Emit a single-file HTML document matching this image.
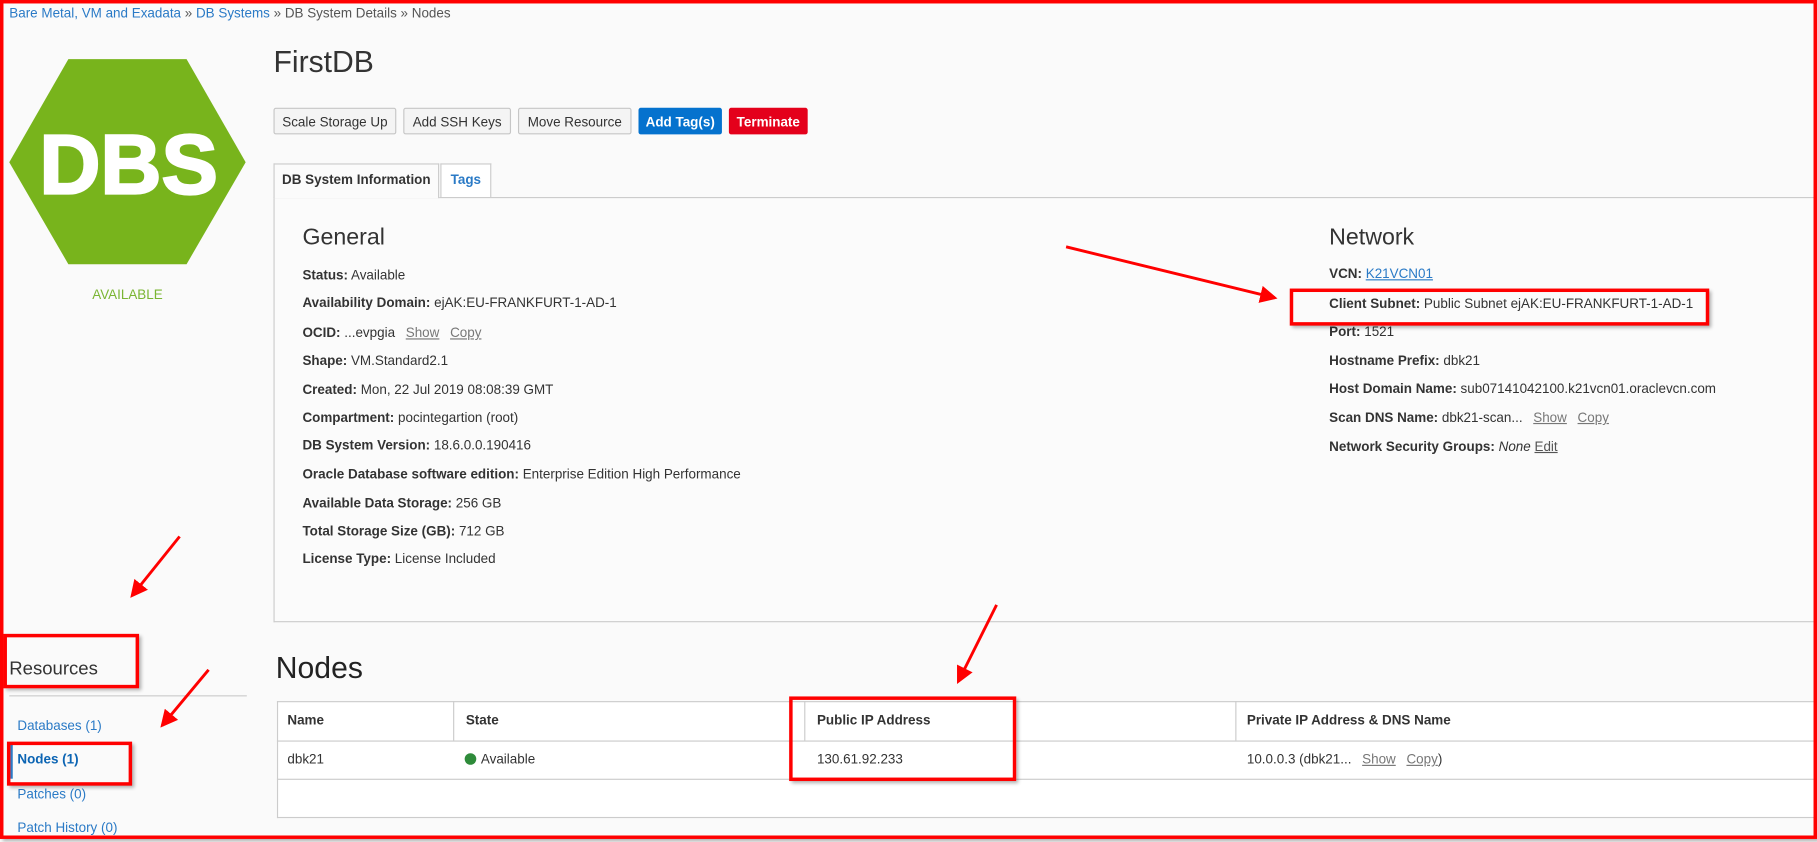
<!DOCTYPE html>
<html><head><meta charset="utf-8"><style>
html,body{margin:0;padding:0;width:1817px;height:842px;overflow:hidden;background:#fff;}
#w{position:absolute;left:0;top:0;width:1568px;height:727px;transform:scale(1.15880);transform-origin:0 0;background:#fafafa;font-family:"Liberation Sans",Arial,sans-serif;color:#333;font-size:11.6px;}
.a{position:absolute;white-space:nowrap;}
a,.lk{color:#2a7ac6;text-decoration:none;}
.btn{position:absolute;top:93px;height:23px;line-height:23px;border:1px solid #c6c6c6;border-radius:2px;background:#f4f4f4;text-align:center;font-size:11.6px;color:#333;box-sizing:border-box;}
.rw{position:absolute;white-space:nowrap;font-size:11.6px;color:#333;}
.rw b{font-weight:bold;color:#333;}
.sm{color:#777;text-decoration:underline;margin-left:6px;}
.rb{position:absolute;border:3px solid #f00;box-sizing:border-box;box-shadow:2px 2px 3px rgba(0,0,0,.3);}
</style></head><body><div id="w">
<div class="a" style="left:8px;top:5px;font-size:11.6px;color:#555;"><span class="lk">Bare Metal, VM and Exadata</span> » <span class="lk">DB Systems</span> » DB System Details » Nodes</div>

<svg class="a" style="left:0;top:0" width="230" height="240"><polygon points="8,140 59,51 161,51 212,140 161,228 59,228" fill="#78b41c"/><text x="111" y="167" text-anchor="middle" font-family="Liberation Sans,Arial,sans-serif" font-weight="bold" font-size="73" fill="#fff" stroke="#fff" stroke-width="2">DBS</text></svg>
<div class="a" style="left:0;width:220px;text-align:center;top:248px;color:#7ab533;font-size:11.6px;">AVAILABLE</div>

<div class="a" style="left:236px;top:38px;font-size:26px;color:#333;">FirstDB</div>
<div class="btn" style="left:236px;width:106px;">Scale Storage Up</div>
<div class="btn" style="left:348px;width:93px;">Add SSH Keys</div>
<div class="btn" style="left:447px;width:98px;">Move Resource</div>
<div class="btn" style="left:551px;width:72px;background:#0572ce;border-color:#0572ce;color:#fff;font-weight:bold;">Add Tag(s)</div>
<div class="btn" style="left:629px;width:68px;background:#e4001b;border-color:#e4001b;color:#fff;font-weight:bold;">Terminate</div>

<div class="a" style="left:236px;top:170px;width:1340px;height:367px;border:1px solid #ccc;border-right:none;box-sizing:border-box;background:#fbfbfb;"></div>
<div class="a" style="left:236px;top:141px;width:143px;height:30px;border:1px solid #ccc;border-bottom:none;box-sizing:border-box;background:#fbfbfb;line-height:28px;text-align:center;font-weight:bold;font-size:11.6px;color:#333;">DB System Information</div>
<div class="a" style="left:380px;top:141px;width:44px;height:29px;border:1px solid #ccc;border-bottom:none;box-sizing:border-box;background:#fff;line-height:28px;text-align:center;font-weight:bold;font-size:11.6px;color:#2a7ac6;">Tags</div>

<div class="a" style="left:261px;top:194px;font-size:20px;color:#333;">General</div>
<div class="rw" style="left:261px;top:231px"><b>Status:</b> Available</div>
<div class="rw" style="left:261px;top:255px"><b>Availability Domain:</b> ejAK:EU-FRANKFURT-1-AD-1</div>
<div class="rw" style="left:261px;top:281px"><b>OCID:</b> ...evpgia <span class="sm">Show</span> <span class="sm">Copy</span></div>
<div class="rw" style="left:261px;top:305px"><b>Shape:</b> VM.Standard2.1</div>
<div class="rw" style="left:261px;top:330px"><b>Created:</b> Mon, 22 Jul 2019 08:08:39 GMT</div>
<div class="rw" style="left:261px;top:354px"><b>Compartment:</b> pocintegartion (root)</div>
<div class="rw" style="left:261px;top:378px"><b>DB System Version:</b> 18.6.0.0.190416</div>
<div class="rw" style="left:261px;top:403px"><b>Oracle Database software edition:</b> Enterprise Edition High Performance</div>
<div class="rw" style="left:261px;top:428px"><b>Available Data Storage:</b> 256 GB</div>
<div class="rw" style="left:261px;top:452px"><b>Total Storage Size (GB):</b> 712 GB</div>
<div class="rw" style="left:261px;top:476px"><b>License Type:</b> License Included</div>

<div class="a" style="left:1147px;top:194px;font-size:20px;color:#333;">Network</div>
<div class="rw" style="left:1147px;top:230px"><b>VCN:</b> <span style="color:#2a7ac6;text-decoration:underline">K21VCN01</span></div>
<div class="rw" style="left:1147px;top:256px"><b>Client Subnet:</b> Public Subnet ejAK:EU-FRANKFURT-1-AD-1</div>
<div class="rw" style="left:1147px;top:280px"><b>Port:</b> 1521</div>
<div class="rw" style="left:1147px;top:305px"><b>Hostname Prefix:</b> dbk21</div>
<div class="rw" style="left:1147px;top:329px"><b>Host Domain Name:</b> sub07141042100.k21vcn01.oraclevcn.com</div>
<div class="rw" style="left:1147px;top:354px"><b>Scan DNS Name:</b> dbk21-scan... <span class="sm">Show</span> <span class="sm">Copy</span></div>
<div class="rw" style="left:1147px;top:379px"><b>Network Security Groups:</b> <i>None</i> <span style="color:#555;text-decoration:underline">Edit</span></div>

<div class="a" style="left:238px;top:561px;font-size:26px;color:#222;">Nodes</div>
<div class="a" style="left:239px;top:605px;width:1340px;height:101px;border:1px solid #ccc;border-right:none;box-sizing:border-box;background:#fff;"></div>
<div class="a" style="left:239px;top:639px;width:1330px;height:1px;background:#ccc;"></div>
<div class="a" style="left:239px;top:672px;width:1330px;height:1px;background:#ccc;"></div>
<div class="a" style="left:391px;top:605px;width:1px;height:34px;background:#ccc;"></div>
<div class="a" style="left:694px;top:605px;width:1px;height:34px;background:#ccc;"></div>
<div class="a" style="left:1066px;top:605px;width:1px;height:34px;background:#ccc;"></div>
<div class="rw" style="left:248px;top:615px;font-weight:bold">Name</div>
<div class="rw" style="left:402px;top:615px;font-weight:bold">State</div>
<div class="rw" style="left:705px;top:615px;font-weight:bold">Public IP Address</div>
<div class="rw" style="left:1076px;top:615px;font-weight:bold">Private IP Address &amp; DNS Name</div>
<div class="rw" style="left:248px;top:649px">dbk21</div>
<div class="rw" style="left:401px;top:649px"><span style="display:inline-block;width:10px;height:10px;border-radius:50%;background:#2e8b3a;vertical-align:-1px;margin-right:4px"></span>Available</div>
<div class="rw" style="left:705px;top:649px">130.61.92.233</div>
<div class="rw" style="left:1076px;top:649px">10.0.0.3 (dbk21... <span class="sm">Show</span> <span class="sm">Copy</span>)</div>

<div class="a" style="left:8px;top:569px;font-size:16px;color:#333;">Resources</div>
<div class="a" style="left:8px;top:600px;width:205px;height:1px;background:#ccc;"></div>
<div class="rw" style="left:15px;top:620px;color:#2a7ac6">Databases (1)</div>
<div class="a" style="left:9px;top:642px;width:2px;height:30px;background:#2a7ac6"></div>
<div class="rw" style="left:15px;top:649px;color:#0b64b3;font-weight:bold">Nodes (1)</div>
<div class="rw" style="left:15px;top:679px;color:#2a7ac6">Patches (0)</div>
<div class="rw" style="left:15px;top:708px;color:#2a7ac6">Patch History (0)</div>

<div class="rb" style="left:1113px;top:249px;width:362px;height:32px;"></div>
<div class="rb" style="left:681px;top:601px;width:196px;height:73px;"></div>
<div class="rb" style="left:3px;top:547px;width:117px;height:47px;"></div>
<div class="rb" style="left:6px;top:640px;width:108px;height:38px;"></div>

<svg class="a" style="left:0;top:0" width="1568" height="727">
<defs><marker id="ar" markerWidth="6" markerHeight="6" refX="5" refY="3" orient="auto"><path d="M0,0 L6,3 L0,6 Z" fill="#f00"/></marker></defs>
<g stroke="#f00" stroke-width="2.5" fill="none" marker-end="url(#ar)">
<line x1="920" y1="213" x2="1100" y2="257"/>
<line x1="860" y1="522" x2="827" y2="588"/>
<line x1="155" y1="463" x2="114" y2="514"/>
<line x1="180" y1="578" x2="140" y2="626"/>
</g></svg>

<div class="a" style="left:0;top:0;width:1568px;height:724px;border:3px solid #f00;box-sizing:border-box;box-shadow:2px 2px 3px rgba(0,0,0,.3);"></div>
</div></body></html>
